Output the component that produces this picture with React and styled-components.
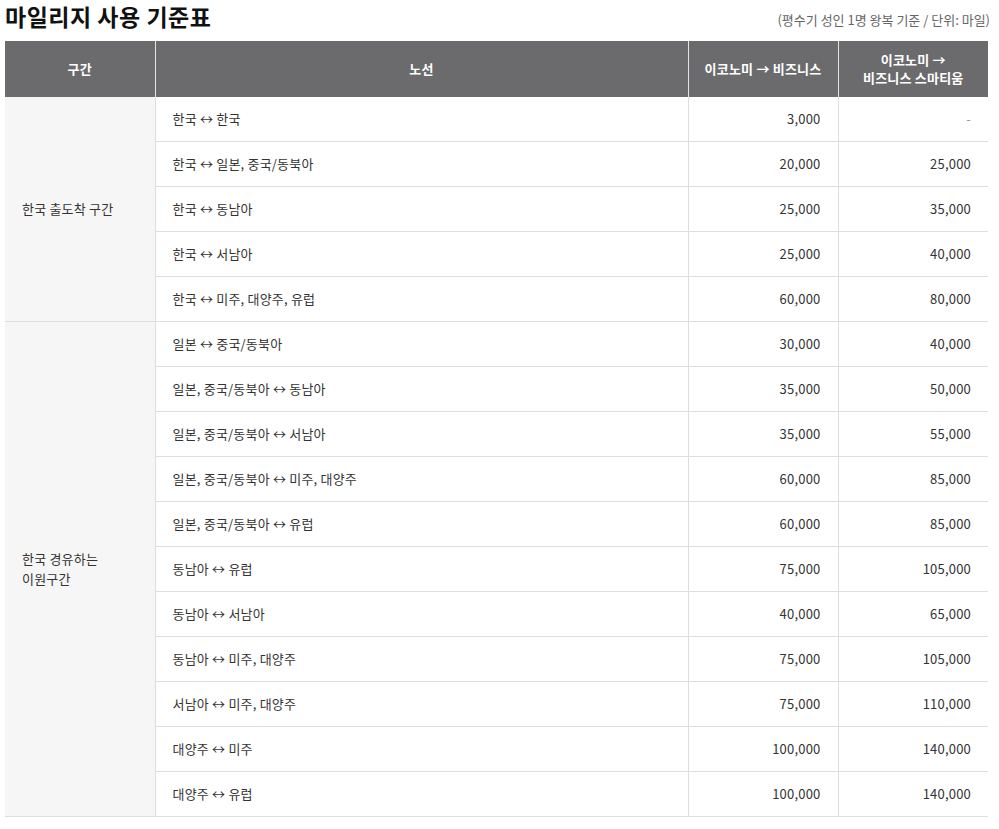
import React from "react";
import styled, { createGlobalStyle } from "styled-components";

const GlobalStyle = createGlobalStyle`
  body {
    margin: 0;
    background: #fff;
    font-family: "Noto Sans CJK KR", "Noto Sans", sans-serif;
    color: #333;
  }
`;

const Wrap = styled.div`
  width: 983px;
  padding: 0 0 0 5px;
`;

const TitleRow = styled.div`
  display: flex;
  justify-content: space-between;
  align-items: flex-end;
  height: 41px;
  box-sizing: border-box;
  padding: 2px 0 11px;
`;

const Title = styled.h2`
  margin: 0;
  font-size: 23px;
  font-weight: 700;
  color: #111;
  line-height: 28px;
  letter-spacing: 0.5px;
`;

const Note = styled.span`
  font-size: 13px;
  color: #666;
  line-height: 18px;
  margin-right: -2px;
  margin-bottom: 1px;
`;

const Table = styled.table`
  width: 983px;
  border-collapse: collapse;
  table-layout: fixed;
  font-size: 13px;
  letter-spacing: 0.2px;
`;

const Th = styled.th`
  background: #6b6b6d;
  color: #fff;
  font-weight: 700;
  height: 56px;
  padding: 0 10px;
  line-height: 18px;
  border-left: 1px solid #e4e4e4;
  &:first-child {
    border-left: none;
  }
`;

const Td = styled.td`
  height: 44px;
  padding: 0 17px;
  border-bottom: 1px solid #ddd;
  border-left: 1px solid #ddd;
  text-align: ${(p) => (p.$num ? "right" : "left")};
  color: ${(p) => (p.$dash ? "#999" : "#333")};
  line-height: 20px;
`;

const GroupTd = styled.td`
  background: #f6f6f6;
  padding: 0 17px;
  border-bottom: 1px solid #ddd;
  line-height: 20px;
  vertical-align: middle;
`;

const groups = [
  {
    name: ["한국 출도착 구간"],
    rows: [
      ["한국 ↔ 한국", "3,000", "-"],
      ["한국 ↔ 일본, 중국/동북아", "20,000", "25,000"],
      ["한국 ↔ 동남아", "25,000", "35,000"],
      ["한국 ↔ 서남아", "25,000", "40,000"],
      ["한국 ↔ 미주, 대양주, 유럽", "60,000", "80,000"],
    ],
  },
  {
    name: ["한국 경유하는", "이원구간"],
    rows: [
      ["일본 ↔ 중국/동북아", "30,000", "40,000"],
      ["일본, 중국/동북아 ↔ 동남아", "35,000", "50,000"],
      ["일본, 중국/동북아 ↔ 서남아", "35,000", "55,000"],
      ["일본, 중국/동북아 ↔ 미주, 대양주", "60,000", "85,000"],
      ["일본, 중국/동북아 ↔ 유럽", "60,000", "85,000"],
      ["동남아 ↔ 유럽", "75,000", "105,000"],
      ["동남아 ↔ 서남아", "40,000", "65,000"],
      ["동남아 ↔ 미주, 대양주", "75,000", "105,000"],
      ["서남아 ↔ 미주, 대양주", "75,000", "110,000"],
      ["대양주 ↔ 미주", "100,000", "140,000"],
      ["대양주 ↔ 유럽", "100,000", "140,000"],
    ],
  },
];

export default function App() {
  return (
    <Wrap>
      <GlobalStyle />
      <TitleRow>
        <Title>마일리지 사용 기준표</Title>
        <Note>(평수기 성인 1명 왕복 기준 / 단위: 마일)</Note>
      </TitleRow>
      <Table>
        <colgroup>
          <col style={{ width: 150 }} />
          <col style={{ width: 533 }} />
          <col style={{ width: 150 }} />
          <col style={{ width: 150 }} />
        </colgroup>
        <thead>
          <tr>
            <Th>구간</Th>
            <Th>노선</Th>
            <Th>이코노미 → 비즈니스</Th>
            <Th>
              이코노미 →<br />
              비즈니스 스마티움
            </Th>
          </tr>
        </thead>
        <tbody>
          {groups.map((g) =>
            g.rows.map((r, i) => (
              <tr key={g.name[0] + i}>
                {i === 0 && (
                  <GroupTd rowSpan={g.rows.length}>
                    {g.name.map((n, k) => (
                      <React.Fragment key={k}>
                        {k > 0 && <br />}
                        {n}
                      </React.Fragment>
                    ))}
                  </GroupTd>
                )}
                <Td>{r[0]}</Td>
                <Td $num>{r[1]}</Td>
                <Td $num $dash={r[2] === "-"}>
                  {r[2]}
                </Td>
              </tr>
            ))
          )}
        </tbody>
      </Table>
    </Wrap>
  );
}
